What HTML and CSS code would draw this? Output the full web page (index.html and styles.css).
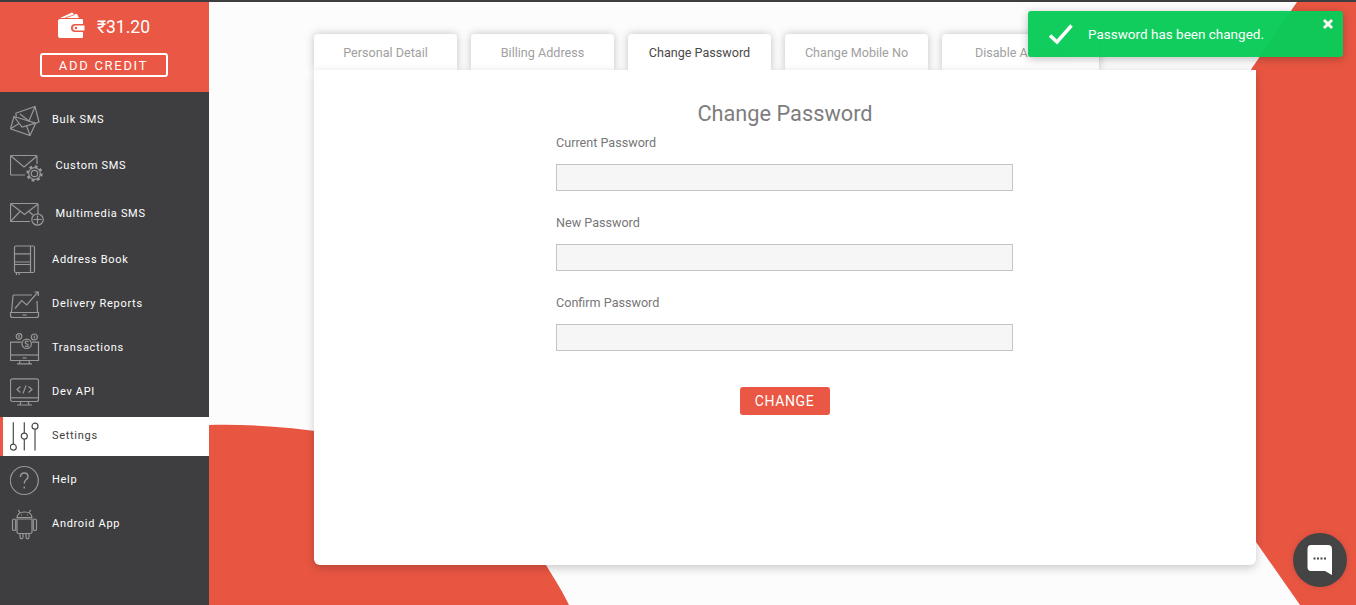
FILE: index.html
```html
<!DOCTYPE html>
<html lang="en">
<head>
<meta charset="utf-8">
<title>Change Password</title>
<link rel="stylesheet" href="styles.css">
</head>
<body>
<svg class="backdrop" viewBox="0 0 1356 603" preserveAspectRatio="none" aria-hidden="true">
  <path class="blob" d="M209 423 C250 422 290 425 330 431 C420 445 500 495 546 563 C555 578 563 590 569 603 L209 603 Z"/>
  <path class="blob" d="M1297 0 L1252 66 C1225 115 1210 190 1208 270 C1206 380 1225 470 1256 540 L1300 603 L1356 603 L1356 0 Z"/>
</svg>
<div class="app">
  <aside class="sidebar">
    <div class="balance">
      <div class="balance-row">
        <svg class="wallet" width="28" height="27" viewBox="0 0 28 27">
          <path class="wallet-fill" d="M2 6 L14 0.500 L16 2 L19 2 L21 6 Z"/>
          <path class="wallet-gap" d="M7 6 L17 2.500"/>
          <path class="wallet-fill" d="M2 7 H24 Q25 7 25 8 V12 H17 Q13 12 13 16 Q13 20 17 20 H25 V25 Q25 26 24 26 H2 Q0 26 0 24 V9 Q0 7 2 7 Z"/>
          <path class="wallet-fill wallet-clasp" d="M17 13 H27 V19 H17 Q14.500 19 14.500 16 Q14.500 13 17 13 Z"/>
          <circle class="wallet-dot" cx="18" cy="16" r="1.200"/>
        </svg>
        <span class="amount">₹31.20</span>
      </div>
      <a class="credit-btn">ADD CREDIT</a>
    </div>
    <nav class="menu">
      <a class="item item-wide">
        <svg class="ico" viewBox="0 0 36 32"><path d="M5.700 8.200 L25 1.500 L29 17 L26 18.200"/><path d="M5.700 8.200 L6.500 11.500"/><path d="M10 9 L19 16 L25 1.500"/><path d="M4 11.500 L25.700 18.200 L20 30.500 L0.500 23.800 Z"/><path d="M4 11.500 L12 22 L25.700 18.200"/><path d="M0.500 23.800 L9 18.500"/><path d="M20 30.500 L16.500 20.800"/></svg>
        <span>Bulk SMS</span>
      </a>
      <a class="item item-wider item-shift">
        <svg class="ico ico-big" viewBox="0 0 36 32"><path d="M15 24 H1.500 Q0.500 24 0.500 23 V5.500 Q0.500 4.500 1.500 4.500 H26 Q27 4.500 27 5.500 V13"/><path d="M1 5 L14 16 L27 5"/><circle class="gear-bg" cx="24.500" cy="22.500" r="8.500"/><circle cx="24.500" cy="22.500" r="3.200"/><circle cx="24.500" cy="22.500" r="5.800"/><circle class="teeth" cx="24.500" cy="22.500" r="7"/></svg>
        <span>Custom SMS</span>
      </a>
      <a class="item item-wide item-shift">
        <svg class="ico ico-big" viewBox="0 0 36 32"><path d="M20 22.500 H1.500 Q0.500 22.500 0.500 21.500 V5.500 Q0.500 4.500 1.500 4.500 H27 Q28 4.500 28 5.500 V15"/><path d="M1 5 L14.500 15.500 L28 5"/><path d="M1 22 L10 12.500"/><path d="M19 12.500 L23 16"/><circle class="gear-bg" cx="27.500" cy="20.500" r="6"/><circle cx="27.500" cy="20.500" r="5.700"/><path d="M27.500 16.500 V24.500 M23.500 20.500 H31.500"/></svg>
        <span>Multimedia SMS</span>
      </a>
      <a class="item">
        <svg class="ico" viewBox="0 0 36 32"><rect x="4.500" y="1" width="20" height="26.500" rx="1.500"/><path d="M20.500 1 V27.500"/><path d="M4.500 8.800 H20.500 M4.500 17 H20.500 M4.500 19.500 H20.500"/><path d="M6.500 27.500 V30 M9 27.500 V30"/></svg>
        <span>Address Book</span>
      </a>
      <a class="item">
        <svg class="ico" viewBox="0 0 36 32"><path d="M1.500 23 L3 7 Q3 6 4 6 H22"/><path d="M27 12 L27.500 23"/><path d="M0.500 23.500 H28.500 V26.500 Q28.500 28.500 26.500 28.500 H2.500 Q0.500 28.500 0.500 26.500 Z"/><path d="M5 19.500 L11.700 11.500 L16.700 16 L28 3"/><path d="M24.500 3 H28.300 V7"/><path d="M12.500 26 H16.500"/></svg>
        <span>Delivery Reports</span>
      </a>
      <a class="item">
        <svg class="ico" viewBox="0 0 36 32"><path d="M11.500 9.200 H0.500 V27.500 H28.500 V9.200 H22"/><path d="M0.500 22 H28.500"/><path d="M12.500 25 H16.500"/><path d="M10 27.500 L9.500 30.500 M19 27.500 L19.500 30.500 M7 30.800 H22"/><circle cx="16.700" cy="10.800" r="4.700"/><path d="M18.500 8.800 Q16.700 7.500 15.300 9 Q15 10.800 17 11 Q18.800 11.800 18 13 Q16.500 14 15 12.800"/><circle cx="9" cy="3.500" r="2.800"/><circle cx="24.300" cy="4" r="3"/><path d="M9 2 V5 M24.300 2.500 V5.500"/></svg>
        <span>Transactions</span>
      </a>
      <a class="item">
        <svg class="ico" viewBox="0 0 36 32"><rect x="0.500" y="1.800" width="28" height="22.700" rx="2"/><path d="M0.500 20.800 H28.500"/><path d="M11 24.500 L10 27.500 M18 24.500 L19 27.500 M7 28 H22"/><path d="M10.500 9.500 L7 12.500 L10.500 15.500"/><path d="M18.500 9.500 L22 12.500 L18.500 15.500"/><path d="M16 8.500 L13 16.500"/></svg>
        <span>Dev API</span>
      </a>
      <a class="item item-active">
        <svg class="ico ico-dark" viewBox="0 0 36 32"><path d="M3.300 1.200 V23"/><circle cx="3.300" cy="26.200" r="3"/><path d="M14.300 1.200 V12 M14.300 18.300 V29.500"/><circle cx="14.300" cy="15.200" r="3"/><path d="M25 8.300 V29.500"/><circle cx="25" cy="5.200" r="3"/></svg>
        <span>Settings</span>
      </a>
      <a class="item">
        <svg class="ico" viewBox="0 0 36 32"><circle cx="14.300" cy="15.500" r="14"/><path class="thick" d="M10.500 12 Q10.500 8 14.300 8 Q18 8 18 11.500 Q18 13.500 15.800 15 Q14.300 16 14.300 18.500"/><path class="thick" d="M14.300 21.500 V23.500"/></svg>
        <span>Help</span>
      </a>
      <a class="item">
        <svg class="ico" viewBox="0 0 36 32"><path d="M7 8.500 Q7.500 3 14.500 3 Q21.500 3 22 8.500 Z"/><path d="M10 3.800 L8.300 1 M19 3.800 L20.700 1"/><path d="M7 10 H22 V23 Q22 24.500 20.500 24.500 H8.500 Q7 24.500 7 23 Z"/><rect x="2.500" y="10" width="3.200" height="11.500" rx="1.600"/><rect x="23.300" y="10" width="3.200" height="11.500" rx="1.600"/><path d="M10 24.500 V28 Q10 29.800 11.500 29.800 Q13 29.800 13 28 V24.500"/><path d="M16 24.500 V28 Q16 29.800 17.500 29.800 Q19 29.800 19 28 V24.500"/><path d="M11 6 H12 M17 6 H18"/></svg>
        <span>Android App</span>
      </a>
    </nav>
  </aside>
  <main class="main">
    <div class="tabs">
      <a class="tab">Personal Detail</a>
      <a class="tab">Billing Address</a>
      <a class="tab tab-active">Change Password</a>
      <a class="tab">Change Mobile No</a>
      <a class="tab tab-last">Disable Account</a>
    </div>
    <section class="card">
      <h1 class="title">Change Password</h1>
      <form class="form">
        <label class="field"><span class="label">Current Password</span><input class="input" type="password"></label>
        <label class="field"><span class="label">New Password</span><input class="input" type="password"></label>
        <label class="field"><span class="label">Confirm Password</span><input class="input" type="password"></label>
        <button class="submit" type="button">CHANGE</button>
      </form>
    </section>
  </main>
</div>
<div class="toast">
  <svg class="toast-check" width="26" height="22" viewBox="0 0 26 22"><path d="M2 12.500 L9 19 L23.500 2.500"/></svg>
  <span class="toast-text">Password has been changed.</span>
  <svg class="toast-close" width="12" height="12" viewBox="0 0 12 12"><path d="M2 2 L10 10 M10 2 L2 10"/></svg>
</div>
<div class="chat">
  <svg width="26" height="32" viewBox="0 0 26 32"><path class="chat-bubble" d="M4 1 H21 Q25 1 25 5 V31 L18 27 H4 Q0.500 27 0.500 23 V5 Q0.500 1 4 1 Z"/><path class="chat-dots" d="M6.500 14.500 H19"/></svg>
</div>
</body>
</html>
```
FILE: styles.css
```css
* { box-sizing: border-box; }
html, body { height: 100%; }
body {
  margin: 0;
  height: 605px;
  overflow: hidden;
  position: relative;
  background: #fcfcfc;
  border-top: 2px solid #3e3e40;
  font-family: Roboto, "Liberation Sans", sans-serif;
}
.backdrop { position: absolute; left: 0; top: 0; width: 1356px; height: 603px; }
.blob { fill: #e85642; }
.app { position: relative; display: flex; height: 603px; }

.sidebar { width: 209px; flex: none; background: #3e3e40; display: flex; flex-direction: column; }
.balance {
  height: 90px;
  background: #ea5744;
  display: flex;
  flex-direction: column;
  align-items: center;
  padding-top: 10px;
}
.balance-row { display: flex; align-items: center; gap: 11px; height: 26px; margin-right: 1px; }
.wallet-fill { fill: #fff; }
.wallet-gap { fill: none; stroke: #ea5744; stroke-width: 0.800; }
.wallet-dot { fill: #ea5744; }
.wallet-clasp { stroke: #ea5744; stroke-width: 1; }
.amount { color: #fff; font-size: 17.500px; margin-top: 4px; }
.credit-btn {
  margin-top: 15px;
  margin-right: 2px;
  width: 128px;
  height: 24px;
  border: 2px solid #fff;
  border-radius: 3px;
  color: #fff;
  font-size: 13px;
  letter-spacing: 1.700px;
  display: flex;
  align-items: center;
  justify-content: center;
}
.menu { display: flex; flex-direction: column; padding-top: 9px; gap: 5px; }
.item {
  height: 39px;
  display: flex;
  align-items: center;
  padding-left: 10px;
  color: #fff;
  font-size: 11px;
  letter-spacing: 0.700px;
}
.item span { margin-top: -3px; }
.item-wide { margin-bottom: 2px; }
.item-wider { margin-bottom: 4px; }
.item-shift span { margin-left: 3.500px; }
.ico {
  flex: none;
  width: 36px;
  height: 32px;
  margin-right: 6px;
  fill: none;
  stroke: #989898;
  stroke-width: 1.200;
}
.gear-bg { fill: #3e3e40; stroke: none; }
.teeth { stroke-width: 2.400; stroke-dasharray: 2.800 2.700; }
.thick { stroke-width: 1.500; }
.item-active {
  background: #fff;
  color: #3e3e40;
  border-left: 3px solid #ea5744;
  padding-left: 7px;
}
.ico-dark { stroke: #4a4a4a; }

.main { flex: none; width: 942px; margin-left: 105px; padding-top: 32px; }
.tabs { display: flex; gap: 14px; }
.tab {
  width: 143px;
  height: 36px;
  background: #fff;
  border-radius: 4px 4px 0 0;
  box-shadow: 0 0 8px rgba(0, 0, 0, 0.24);
  color: #a0a0a0;
  font-size: 12.600px;
  display: flex;
  align-items: center;
  justify-content: center;
}
.tab-active {
  color: #4a4a4a;
  position: relative;
  z-index: 2;
  clip-path: inset(-12px -12px 0 -12px);
}
.tab-last { width: 157px; }
.card {
  position: relative;
  z-index: 1;
  height: 495px;
  background: #fff;
  border-radius: 0 0 6px 6px;
  box-shadow: 0 3px 10px rgba(0, 0, 0, 0.2);
  padding-top: 29px;
}
.title {
  margin: 0 0 6px;
  font-size: 21.750px;
  font-weight: 400;
  line-height: 30px;
  color: #7d7d7d;
  text-align: center;
}
.form { width: 457px; margin-left: 242px; display: flex; flex-direction: column; gap: 24px; }
.field { display: flex; flex-direction: column; gap: 13px; }
.label { font-size: 12.600px; line-height: 16px; color: #777; }
.input { height: 27px; background: #f6f6f6; border: 1px solid #c4c4c4; padding: 0 8px; outline: none; }
.submit {
  align-self: center;
  margin-top: 12px;
  width: 90px;
  height: 28px;
  border: 0;
  border-radius: 3px;
  background: #ea5744;
  color: #fff;
  font-family: inherit;
  font-size: 14px;
  letter-spacing: 0.600px;
  padding: 0;
}

.toast {
  position: absolute;
  left: 1028px;
  top: 9px;
  width: 315px;
  height: 46px;
  background: #0acc58;
  opacity: 0.97;
  border-radius: 3px;
  box-shadow: 0 2px 8px rgba(0, 0, 0, 0.25);
  display: flex;
  align-items: center;
  padding-left: 20px;
}
.toast-check { fill: none; stroke: #fff; stroke-width: 3.500; flex: none; }
.toast-text { color: #fff; font-size: 13.500px; margin-left: 14px; margin-top: -1px; }
.toast-close {
  position: absolute;
  right: 9px;
  top: 7px;
  fill: none;
  stroke: #fff;
  stroke-width: 3;
}
.chat {
  position: absolute;
  left: 1293px;
  top: 531px;
  width: 54px;
  height: 54px;
  border-radius: 50%;
  background: #444;
  box-shadow: 0 0 6px rgba(0, 0, 0, 0.12);
  display: flex;
  align-items: center;
  justify-content: center;
}
.chat-bubble { fill: #fff; }
.chat-dots { stroke: #444; stroke-width: 2; stroke-dasharray: 2 1.500; fill: none; }
```
